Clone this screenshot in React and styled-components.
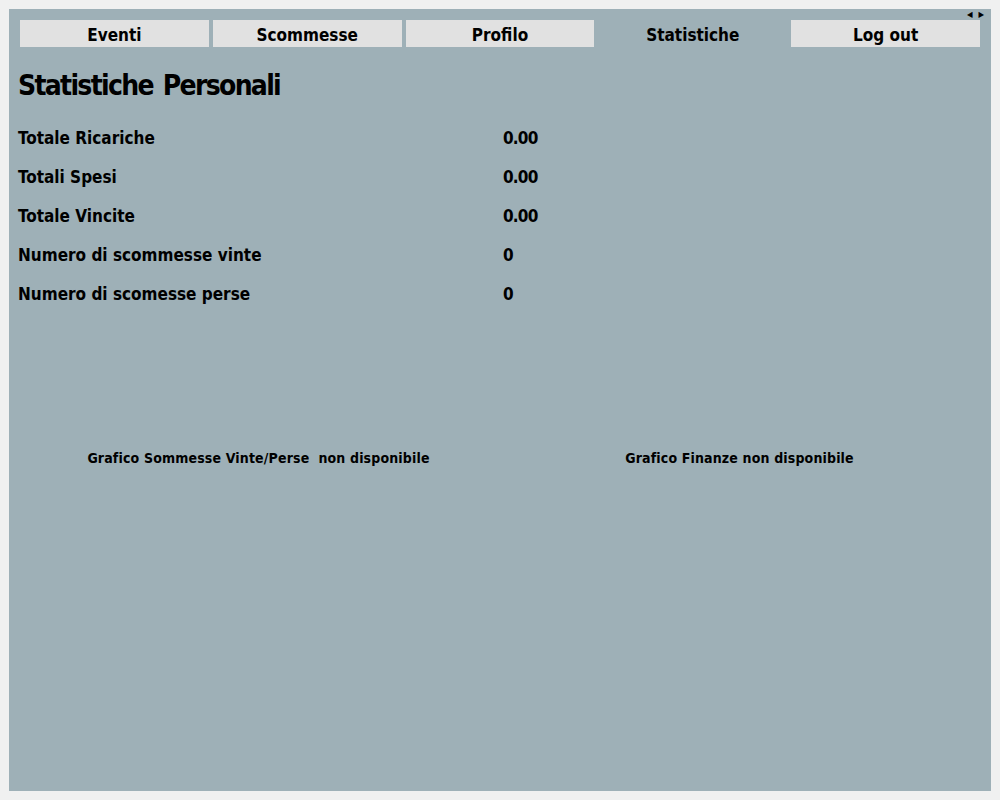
import React from "react";
import styled, { createGlobalStyle } from "styled-components";

const Global = createGlobalStyle`
  html, body { margin: 0; padding: 0; background: #f0f0f0; }
  body { font-family: "DejaVu Sans Condensed", "DejaVu Sans", sans-serif; }
`;

const Page = styled.div`
  padding: 9px;
  width: 1000px;
  height: 800px;
  box-sizing: border-box;
`;

const Panel = styled.div`
  position: relative;
  background: #9eb0b7;
  height: 782px;
  padding: 11px 11px 0 9px;
  box-sizing: border-box;
  color: #000;
  display: flex;
  flex-direction: column;
`;

const Tabs = styled.div`
  display: grid;
  grid-template-columns: repeat(5, 1fr);
  gap: 4px;
  padding-left: 2px;
`;

const Tab = styled.div`
  height: 27px;
  background: ${(p) => (p.$active ? "transparent" : "#e1e1e1")};
  display: flex;
  align-items: center;
  justify-content: center;
  font-size: 17px;
  font-weight: bold;
  padding-top: 2px;
  box-sizing: border-box;
`;

const Scroller = styled.div`
  position: absolute;
  top: 2px;
  right: 7px;
  display: flex;
  gap: 6px;
  font-size: 8px;
  line-height: 8px;
`;

const Title = styled.h1`
  margin: 22px 0 0 0;
  font-size: 28px;
  font-weight: bold;
  line-height: 34px;
  letter-spacing: -1.7px;
  word-spacing: 3px;
`;

const Stats = styled.div`
  margin-top: 24px;
  display: flex;
  flex-direction: column;
  gap: 16px;
`;

const Row = styled.div`
  display: grid;
  grid-template-columns: 485px 1fr;
  font-size: 17px;
  font-weight: bold;
  line-height: 23px;
`;

const Value = styled.span`
  letter-spacing: -0.8px;
`;

const Charts = styled.div`
  margin-top: 144px;
  display: grid;
  grid-template-columns: 1fr 1fr;
`;

const ChartLabel = styled.div`
  text-align: center;
  font-size: 14px;
  font-weight: bold;
  white-space: pre;
  letter-spacing: 0.15px;
`;

const stats = [
  ["Totale Ricariche", "0.00"],
  ["Totali Spesi", "0.00"],
  ["Totale Vincite", "0.00"],
  ["Numero di scommesse vinte", "0"],
  ["Numero di scomesse perse", "0"],
];

export default function App() {
  return (
    <>
      <Global />
      <Page>
        <Panel>
          <Scroller>
            <span>◀</span>
            <span>▶</span>
          </Scroller>
          <Tabs>
            <Tab>Eventi</Tab>
            <Tab>Scommesse</Tab>
            <Tab>Profilo</Tab>
            <Tab $active>Statistiche</Tab>
            <Tab>Log out</Tab>
          </Tabs>
          <Title>Statistiche Personali</Title>
          <Stats>
            {stats.map(([k, v]) => (
              <Row key={k}>
                <span>{k}</span>
                <Value>{v}</Value>
              </Row>
            ))}
          </Stats>
          <Charts>
            <ChartLabel>Grafico Sommesse Vinte/Perse  non disponibile</ChartLabel>
            <ChartLabel>Grafico Finanze non disponibile</ChartLabel>
          </Charts>
        </Panel>
      </Page>
    </>
  );
}
